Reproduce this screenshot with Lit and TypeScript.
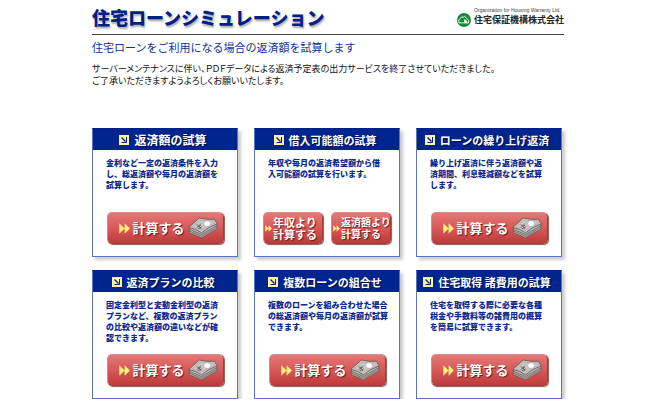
import { LitElement, html, css, svg } from "lit";
import { customElement, property } from "lit/decorators.js";
import { classMap } from "lit/directives/class-map.js";

interface Action {
  lines: string[];
}

interface Plan {
  title: string;
  wide?: boolean;
  text: string[];
  actions: Action[];
}

const CALC: Action[] = [{ lines: ["計算する"] }];

const PLANS: Plan[] = [
  {
    title: "返済額の試算",
    wide: true,
    text: ["金利など一定の返済条件を入力", "し、総返済額や毎月の返済額を", "試算します。"],
    actions: CALC,
  },
  {
    title: "借入可能額の試算",
    text: ["年収や毎月の返済希望額から借", "入可能額の試算を行います。"],
    actions: [{ lines: ["年収より", "計算する"] }, { lines: ["返済額より", "計算する"] }],
  },
  {
    title: "ローンの繰り上げ返済",
    text: ["繰り上げ返済に伴う返済額や返", "済期間、利息軽減額などを試算", "します。"],
    actions: CALC,
  },
  {
    title: "返済プランの比較",
    text: ["固定金利型と変動金利型の返済", "プランなど、複数の返済プラン", "の比較や返済額の違いなどが確", "認できます。"],
    actions: CALC,
  },
  {
    title: "複数ローンの組合せ",
    text: ["複数のローンを組み合わせた場合", "の総返済額や毎月の返済額が試算", "できます。"],
    actions: CALC,
  },
  {
    title: "住宅取得 諸費用の試算",
    text: ["住宅を取得する際に必要な各種", "税金や手数料等の諸費用の概算", "を簡易に試算できます。"],
    actions: CALC,
  },
];

const corner = html`<svg class="corner" viewBox="0 0 10 10" aria-hidden="true">
  <rect width="10" height="10" fill="#fff3a8" />
  <path d="M2.5 2.5 L6.5 6.5" stroke="#00208a" stroke-width="1.2" />
  <path d="M7.5 2 V7.5 H2.5" fill="none" stroke="#00208a" stroke-width="1" />
</svg>`;

const arrows = html`<svg class="arrows" viewBox="0 0 11 11" aria-hidden="true">
  <path d="M0.3 0.3 L5.6 5.5 L0.3 10.7 Z M5.6 0.3 L10.9 5.5 L5.6 10.7 Z" fill="#fff07a" />
</svg>`;

const layers = [5, 3.4, 1.7].map(
  (d) => svg`<path transform="translate(0 ${d})" d="M0.8 10.5 L11.2 1 L26.5 2.2 L29.2 6.8 L13.6 15.8 Z"
    fill="#b9b4b1" stroke="#5d5654" stroke-width="0.7" stroke-linejoin="round" />`
);

const money = html`<svg class="money" viewBox="0 0 30 23" aria-hidden="true">
  ${layers}
  <path d="M0.8 10.5 L11.2 1 Q19 3 26.5 2.2 Q27.6 5 29.2 6.8 Q20 10 13.6 15.8 Q8 11.6 0.8 10.5 Z"
    fill="#cbc6c3" stroke="#5d5654" stroke-width="0.8" stroke-linejoin="round" />
  <path d="M4 10.1 L12 3 Q19 4.6 25.2 3.8 L26.6 6.4 Q19 8.8 13.2 13.4 Q9 10.8 4 10.1 Z"
    fill="none" stroke="#a39d9a" stroke-width="0.5" />
  <ellipse cx="19.2" cy="6.6" rx="3.4" ry="2.9" fill="#fff" stroke="#8d8785" stroke-width="0.4" />
  <path d="M8.6 7.6 L11 9 L12.8 6.6 M11 9 L13 12 M8.8 10.4 L12.8 8.4 M10 11.8 L13.8 9.8"
    fill="none" stroke="#5a5452" stroke-width="0.8" />
</svg>`;

@customElement("plan-card")
class PlanCard extends LitElement {
  @property({ attribute: false }) plan!: Plan;

  static styles = css`
    :host {
      display: flex;
      flex-direction: column;
      box-sizing: border-box;
      min-height: 129px;
      border: 1px solid #5a74bd;
      border-top-color: #00208a;
      background: #fff;
      box-shadow: 3px 3px 3px #ccc;
      color: #0a2a90;
    }
    .title {
      display: flex;
      align-items: center;
      justify-content: center;
      gap: 5px;
      height: 21px;
      margin: 0;
      padding-right: 4px;
      background: #00258e;
      color: #fff;
      font-size: 11px;
      line-height: 20px;
      font-weight: 700;
      white-space: nowrap;
      text-shadow: 1px 1px 1px #000c40;
    }
    .wide {
      font-size: 12px;
    }
    .corner {
      width: 10px;
      height: 10px;
      flex: none;
    }
    .text {
      margin: 0;
      padding: 7px 0 0 13px;
      font-size: 8px;
      line-height: 11px;
      font-weight: 900;
      white-space: nowrap;
    }
    .actions {
      display: flex;
      justify-content: center;
      gap: 8px;
      margin-top: auto;
      padding: 0 8px 12px;
    }
    .button {
      display: flex;
      align-items: center;
      box-sizing: border-box;
      width: 117px;
      height: 32px;
      padding: 0 5px 0 11px;
      border: 1px solid #b85050;
      border-color: #dc8a88 #a23a3a #a23a3a #dc8a88;
      border-radius: 5px;
      background: linear-gradient(#e47876, #d55655 55%, #bd3b3b);
      box-shadow: 1px 1px 1px #8a5a5a;
      color: #fff;
      font-family: inherit;
      font-size: 13px;
      line-height: 16px;
      font-weight: 700;
      text-align: left;
      white-space: nowrap;
      text-shadow: 1px 1px 1px #6b1818;
      cursor: pointer;
    }
    .label {
      flex: 1;
      padding-left: 3px;
    }
    .small {
      flex: 1 1 0;
      width: auto;
      min-width: 0;
      padding: 0 0 0 1px;
      font-size: 11px;
      line-height: 12px;
    }
    .small .label {
      padding-left: 1px;
    }
    .long {
      font-size: 10px;
    }
    .line {
      display: block;
    }
    .arrows {
      width: 11px;
      height: 11px;
      flex: none;
    }
    .small .arrows {
      width: 7px;
      height: 7px;
    }
    .money {
      width: 30px;
      height: 23px;
      flex: none;
    }
  `;

  render() {
    const { title, wide, text, actions } = this.plan;
    const pair = actions.length > 1;
    return html`
      <h2 class=${classMap({ title: true, wide: !!wide })}>${corner}<span>${title}</span></h2>
      <p class="text">${text.map((line, i) => (i ? html`<br />${line}` : line))}</p>
      <div class="actions">
        ${actions.map(
          ({ lines }) => html`<button
            type="button"
            class=${classMap({ button: true, small: pair, long: lines[0].length > 4 })}
          >
            ${arrows}<span class="label">${lines.map((line) => html`<span class="line">${line}</span>`)}</span>
            ${pair ? "" : money}
          </button>`
        )}
      </div>
    `;
  }
}

@customElement("app-root")
class AppRoot extends LitElement {
  static styles = css`
    :host {
      display: block;
      background: #fff;
      font-family: "Noto Sans CJK JP", "Liberation Sans", sans-serif;
    }
    .page {
      box-sizing: border-box;
      max-width: 476px;
      margin: 0 auto;
      padding-right: 4px;
    }
    .header {
      display: flex;
      justify-content: space-between;
      align-items: center;
      height: 34px;
      border-bottom: 1px solid #444;
    }
    .heading {
      margin: 0;
      color: #00208a;
      font-size: 18px;
      line-height: 34px;
      font-weight: 900;
      white-space: nowrap;
      text-shadow: 1px 2px 2px #aaa;
    }
    .company {
      display: grid;
      grid-template-columns: 14px auto;
      column-gap: 3px;
      color: #222;
      white-space: nowrap;
    }
    .english {
      grid-column: 2;
      font-family: "Liberation Sans", sans-serif;
      font-size: 5px;
      line-height: 6px;
      color: #444;
    }
    .mark {
      width: 14px;
      height: 14px;
    }
    .name {
      font-size: 9px;
      line-height: 14px;
      font-weight: 700;
    }
    .lead {
      margin: 0;
      padding-top: 4px;
      color: #0c329c;
      font-size: 11px;
      line-height: 16px;
      font-weight: 400;
      white-space: nowrap;
    }
    .notice {
      margin: 0;
      padding-top: 8px;
      color: #111;
      font-size: 9px;
      line-height: 12px;
      font-feature-settings: "palt";
    }
    .plans {
      display: grid;
      grid-template-columns: repeat(auto-fit, minmax(140px, 1fr));
      gap: 13px 16px;
      padding: 41px 2px 0 0;
    }
  `;

  render() {
    return html`
      <main class="page">
        <header class="header">
          <h1 class="heading">住宅ローンシミュレーション</h1>
          <div class="company">
            <span class="english">Organization for Housing Warranty Ltd.</span>
            <svg class="mark" viewBox="0 0 14 14" aria-hidden="true">
              <circle cx="7" cy="7" r="7" fill="#16883a" />
              <path
                d="M1.8 9.8 V7 L5 3.6 L6.2 4.6 L7.4 3.2 L11.6 7.2 V10 Z"
                fill="none"
                stroke="#fff"
                stroke-width="0.9"
                stroke-linejoin="round"
              />
              <path d="M7.6 9.6 V6.4 L10 8.6 V9.6 Z" fill="#fff" stroke="#fff" stroke-width="0.7" />
            </svg>
            <span class="name">住宅保証機構株式会社</span>
          </div>
        </header>
        <p class="lead">住宅ローンをご利用になる場合の返済額を試算します</p>
        <p class="notice">
          サーバーメンテナンスに伴い、ＰＤＦデータによる返済予定表の出力サービスを終了させていただきました。<br />ご了承いただきますようよろしくお願いいたします。
        </p>
        <section class="plans">${PLANS.map((plan) => html`<plan-card .plan=${plan}></plan-card>`)}</section>
      </main>
    `;
  }
}
